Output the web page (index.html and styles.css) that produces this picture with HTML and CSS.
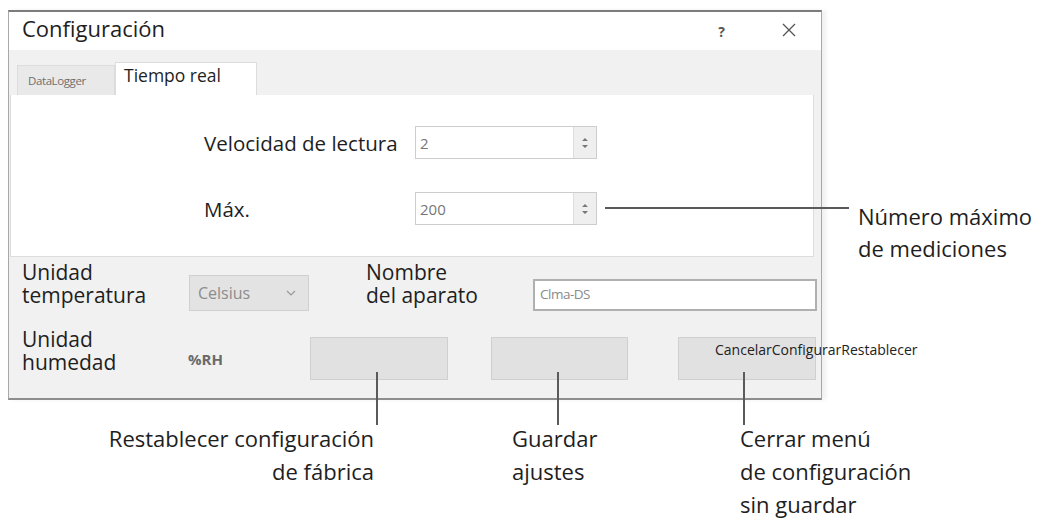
FILE: index.html
```html
<!DOCTYPE html>
<html lang="es">
<head>
  <meta charset="UTF-8">
  <title>Configuración</title>
  <meta name="viewport" content="width=device-width, initial-scale=1.0">
  <link rel="stylesheet" href="styles.css">
</head>
<body>
  <div class="figure">

    <div class="top">
      <!-- Dialog -->
      <div class="dialog">
        <div class="titlebar">
          <span class="title">Configuración</span>
          <span class="help">?</span>
          <span class="close">
            <svg width="14" height="14" viewBox="0 0 14 14"><path d="M1 1 L13 13 M13 1 L1 13" stroke="#555" stroke-width="1.3" fill="none"/></svg>
          </span>
        </div>

        <div class="tabs">
          <div class="tab">DataLogger</div>
          <div class="tab active">Tiempo real</div>
        </div>

        <div class="panel">
          <div class="field-row">
            <span class="field-label">Velocidad de lectura</span>
            <div class="spin">
              <span class="spin-value">2</span>
              <span class="spin-btn">
                <svg width="8" height="14" viewBox="0 0 8 14"><path d="M1 5 L4 2 L7 5 Z M1 9 L4 12 L7 9 Z" fill="#777"/></svg>
              </span>
            </div>
          </div>
          <div class="field-row">
            <span class="field-label">Máx.</span>
            <div class="spin">
              <span class="spin-value">200</span>
              <span class="spin-btn">
                <svg width="8" height="14" viewBox="0 0 8 14"><path d="M1 5 L4 2 L7 5 Z M1 9 L4 12 L7 9 Z" fill="#777"/></svg>
              </span>
            </div>
          </div>
        </div>

        <div class="lower">
          <div class="lower-row">
            <span class="lbl">Unidad<br>temperatura</span>
            <div class="combo">
              <span>Celsius</span>
              <svg width="10" height="6" viewBox="0 0 10 6"><path d="M1 1 L5 5 L9 1" stroke="#999" stroke-width="1.2" fill="none"/></svg>
            </div>
            <span class="lbl lbl-name">Nombre<br>del aparato</span>
            <div class="text-input">Clma-DS</div>
          </div>
          <div class="lower-row">
            <span class="lbl lbl-hum">Unidad<br>humedad</span>
            <span class="unit">%RH</span>
            <div class="btn"></div>
            <div class="btn btn-mid"></div>
            <div class="btn btn-last"><span class="btn-text">CancelarConfigurarRestablecer</span></div>
          </div>
        </div>
      </div>

      <div class="side-note">Número máximo<br>de mediciones</div>
    </div>

    <!-- Callouts below -->
    <div class="notes">
      <div class="note note-reset">Restablecer configuración<br>de fábrica</div>
      <div class="note note-save">Guardar<br>ajustes</div>
      <div class="note">Cerrar menú<br>de configuración<br>sin guardar</div>
    </div>

    <!-- Leader lines -->
    <div class="leader leader-h"></div>
    <div class="leader leader-v lv1"></div>
    <div class="leader leader-v lv2"></div>
    <div class="leader leader-v lv3"></div>
  </div>
</body>
</html>
```

FILE: styles.css
```css
body {
  margin: 0;
  background-color: #fff;
  font-family: 'Open Sans', 'Noto Sans', sans-serif;
  color: #1e1e1e;
  overflow: hidden;
}

.figure {
  position: relative;
  padding: 10px 0 0 8px;
}

.top {
  display: flex;
  align-items: flex-start;
}

/* Dialog */
.dialog {
  width: 814px;
  height: 390px;
  box-sizing: border-box;
  background-color: #f1f1f1;
  border: 1px solid #a8a8a8;
  border-top: 2px solid #7c7c7c;
  border-bottom: 2px solid #8e8e8e;
  box-shadow: 4px 0 4px rgba(0, 0, 0, 0.06);
}

.titlebar {
  height: 38px;
  display: flex;
  align-items: center;
  background-color: #fff;
  padding-left: 13px;
}

.title {
  font-size: 22px;
  line-height: 1;
  margin-top: -6px;
}

.help {
  margin-left: auto;
  font-size: 14px;
  font-weight: bold;
  color: #555;
  margin-top: 0;
}

.close {
  display: flex;
  margin-left: 57px;
  margin-right: 25px;
  margin-top: -2px;
}

.tabs {
  height: 45px;
  display: flex;
  align-items: flex-end;
  padding-left: 8px;
}

.tab {
  width: 98px;
  height: 30px;
  box-sizing: border-box;
  background-color: #e9e9e9;
  border: 1px solid #dcdcdc;
  border-bottom: none;
  font-size: 11.5px;
  letter-spacing: -0.4px;
  color: #6e6e6e;
  padding: 7px 0 0 10px;
}

.tab.active {
  width: 142px;
  height: 33px;
  background-color: #fff;
  font-size: 17.5px;
  letter-spacing: 0;
  color: #1e1e1e;
  padding: 0 0 0 8px;
}

.panel {
  height: 162px;
  box-sizing: border-box;
  margin: 0 7px 0 1px;
  background-color: #fff;
  border: 1px solid #dcdcdc;
  border-top: none;
  padding: 31px 0 0 193px;
  display: flex;
  flex-direction: column;
  gap: 33px;
}

.field-row {
  display: flex;
  align-items: center;
}

.field-label {
  width: 211px;
  font-size: 20.5px;
  white-space: nowrap;
}

.spin {
  width: 182px;
  height: 33px;
  box-sizing: border-box;
  border: 1px solid #cdcdcd;
  display: flex;
  align-items: center;
}

.spin-value {
  flex: 1;
  font-size: 15px;
  color: #767676;
  padding-left: 4px;
}

.spin-btn {
  width: 22px;
  height: 100%;
  display: flex;
  align-items: center;
  justify-content: center;
  background-color: #efefef;
  border-left: 1px solid #dedede;
}

/* Lower part */
.lower {
  padding: 4px 0 0 13px;
}

.lower-row {
  display: flex;
  align-items: flex-start;
}

.lbl {
  width: 167px;
  font-size: 21px;
  line-height: 23px;
  white-space: nowrap;
}

.lbl-hum {
  width: 166px;
  margin-top: 17px;
}

.lbl-name {
  width: 167px;
  margin-left: 57px;
}

.combo {
  width: 120px;
  height: 36px;
  box-sizing: border-box;
  margin-top: 14px;
  background-color: #e3e3e3;
  border: 1px solid #d0d0d0;
  display: flex;
  align-items: center;
  justify-content: space-between;
  padding: 0 12px 0 8px;
  font-size: 16px;
  color: #8c8c8c;
}

.text-input {
  width: 284px;
  height: 32px;
  box-sizing: border-box;
  margin-top: 18px;
  background-color: #fff;
  border: 2px solid #b0b0b0;
  font-size: 13.5px;
  letter-spacing: -0.5px;
  color: #8a8a8a;
  padding: 4px 0 0 5px;
}

.unit {
  width: 122px;
  margin-top: 38px;
  font-size: 15px;
  font-weight: bold;
  color: #6a6a6a;
}

.btn {
  width: 138px;
  height: 43px;
  box-sizing: border-box;
  margin-top: 26px;
  background-color: #e1e1e1;
  border: 1px solid #cfcfcf;
}

.btn-mid {
  margin-left: 43px;
  width: 137px;
}

.btn-last {
  margin-left: 50px;
  padding: 0 0 0 36px;
  white-space: nowrap;
}

.btn-text {
  font-size: 14px;
  color: #222;
}

/* Callouts */
.side-note {
  margin: 190px 0 0 36px;
  font-size: 22px;
  line-height: 32px;
  white-space: nowrap;
}

.notes {
  display: flex;
  margin-top: 22px;
  font-size: 22px;
  line-height: 33px;
}

.note {
  white-space: nowrap;
}

.note-reset {
  width: 366px;
  text-align: right;
}

.note-save {
  width: 228px;
  margin-left: 138px;
}

.leader {
  position: absolute;
  background-color: #5a5a5a;
}

.leader-h {
  left: 605px;
  top: 207px;
  width: 244px;
  height: 2px;
}

.leader-v {
  top: 372px;
  width: 2px;
  height: 53px;
}

.lv1 { left: 376px; }
.lv2 { left: 557px; }
.lv3 { left: 743px; }
```
